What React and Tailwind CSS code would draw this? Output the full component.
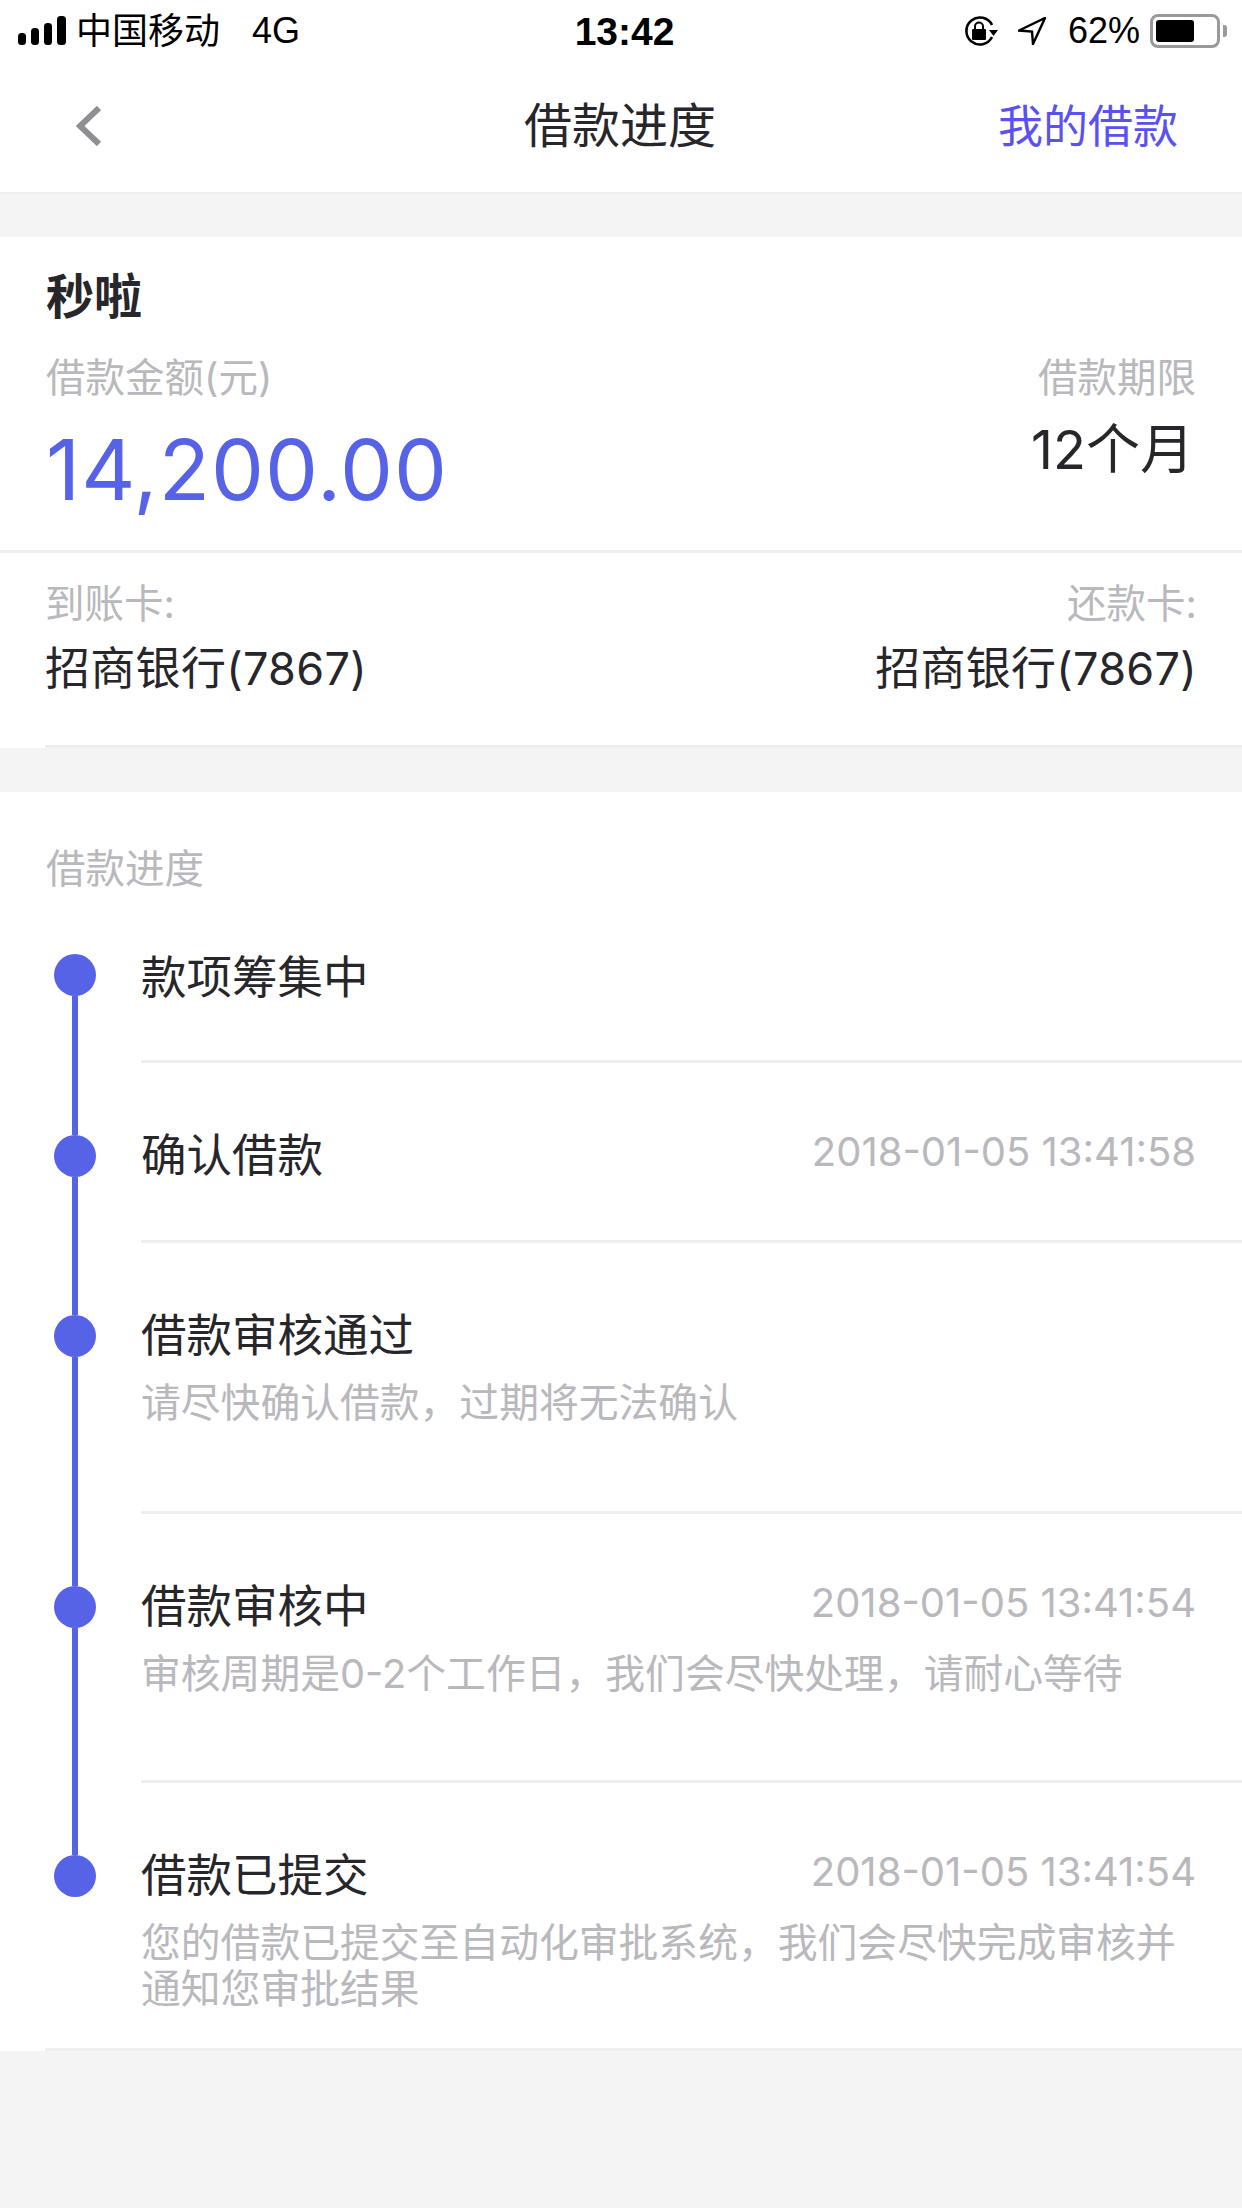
import React from "react";

const rows = [
  { title: "款项筹集中", h: "h-[170px]" },
  { title: "确认借款", time: "2018-01-05 13:41:58", h: "h-[180px]" },
  { title: "借款审核通过", desc: "请尽快确认借款，过期将无法确认", h: "h-[271px]" },
  {
    title: "借款审核中",
    time: "2018-01-05 13:41:54",
    desc: "审核周期是0-2个工作日，我们会尽快处理，请耐心等待",
    h: "h-[269px]",
  },
  {
    title: "借款已提交",
    time: "2018-01-05 13:41:54",
    desc: "您的借款已提交至自动化审批系统，我们会尽快完成审核并通知您审批结果",
    h: "h-[268px]",
    last: true,
  },
];

const StatusBar = () => (
  <div className="grid h-[60px] grid-cols-[1fr_auto_1fr] items-center pl-[18px] pr-[15px] pt-[2px] text-[36px] leading-none text-black">
    <div className="flex items-center">
      <svg width="48" height="30" viewBox="0 0 48 30" className="mr-[10px]">
        <rect x="0" y="17" width="8" height="12" rx="3.5" fill="#000" />
        <rect x="13" y="12" width="8" height="17" rx="3.5" fill="#000" />
        <rect x="26" y="7" width="8" height="22" rx="3.5" fill="#000" />
        <rect x="39" y="0" width="9" height="29" rx="3.5" fill="#000" />
      </svg>
      <span className="text-[36px]">中国移动</span>
      <span className="ml-[32px] font-['Liberation_Sans',sans-serif] text-[36px]">4G</span>
    </div>
    <div className="font-['Liberation_Sans',sans-serif] pl-[4px] text-[39px] font-bold">13:42</div>
    <div className="flex items-center justify-end">
      <svg width="34" height="30" viewBox="0 0 34 30" className="mr-[20px]">
        <path d="M28 21A13.5 13.5 0 1 1 28 9" fill="none" stroke="#000" strokeWidth="2.6" />
        <path d="M25 14h9l-4.500 6z" fill="#000" />
        <rect x="8" y="13" width="14" height="11" rx="1" fill="#000" />
        <path d="M11 13v-2.500a4 4 0 0 1 8 0V13" fill="none" stroke="#000" strokeWidth="2" />
      </svg>
      <svg width="28" height="28" viewBox="0 0 28 28" className="mr-[22px]">
        <path d="M27 1 1 13.500l13 1 1 12.500z" fill="none" stroke="#000" strokeWidth="2.400" strokeLinejoin="miter" />
      </svg>
      <span className="font-['Liberation_Sans',sans-serif] text-[36px]">62%</span>
      <div className="ml-[10px] flex h-[34px] w-[70px] items-stretch rounded-[8px] border-[3px] border-[#999999] p-[3px]">
        <div className="w-[38px] rounded-[3px] bg-black" />
      </div>
      <div className="ml-[3px] h-[12px] w-[4px] rounded-r-[3px] bg-[#999999]" />
    </div>
  </div>
);

const NavBar = () => (
  <div className="grid h-[134px] grid-cols-[1fr_auto_1fr] items-center border-b-[2px] border-[#eeeeee] pl-[76px] pr-[64px]">
    <svg width="26" height="40" viewBox="0 0 26 40">
      <path d="M23 2 4 20l19 18" fill="none" stroke="#8e8e93" strokeWidth="6" />
    </svg>
    <div className="pr-[14px] text-[48px] leading-none text-[#26262b]">借款进度</div>
    <div className="text-right text-[45px] leading-none text-[#5b50f0]">我的借款</div>
  </div>
);

const Summary = () => (
  <div className="bg-white">
    <div className="flex h-[316px] flex-col border-b-[3px] border-[#eeeeee] px-[46px]">
      <div className="mt-[36px] text-[48px] font-bold leading-[48px] text-[#26262b]">秒啦</div>
      <div className="mt-[33px] flex items-start justify-between">
        <div>
          <div className="text-[39.5px] leading-[48px] text-[#b8b8bd]">借款金额(元)</div>
          <div className="mt-[23px] text-[84px] leading-[90px] tracking-[1px] text-[#5763e6]">14,200.00</div>
        </div>
        <div className="flex flex-col items-end">
          <div className="text-[39.5px] leading-[48px] text-[#b8b8bd]">借款期限</div>
          <div className="mt-[18px] pr-[2px] text-[54px] leading-[60px] text-[#26262b]">12个月</div>
        </div>
      </div>
    </div>
    <div className="ml-[45px] flex h-[195px] justify-between border-b-[3px] border-[#eeeeee] pr-[45px] pt-[27px]">
      <div>
        <div className="text-[39.5px] leading-[48px] text-[#b8b8bd]">到账卡:</div>
        <div className="mt-[15px] text-[45px] leading-[52px] tracking-[0.3px] text-[#26262b]">招商银行(7867)</div>
      </div>
      <div className="flex flex-col items-end">
        <div className="text-[39.5px] leading-[48px] text-[#b8b8bd]">还款卡:</div>
        <div className="mt-[15px] text-[45px] leading-[52px] tracking-[0.3px] text-[#26262b]">招商银行(7867)</div>
      </div>
    </div>
  </div>
);

const Step = ({ title, time, desc, h, index, last }) => (
  // the last row's divider runs further left, under the dot column
  <div className={`flex ${h} ${last ? "ml-[45px] border-b-[3px] border-[#eeeeee]" : ""}`}>
    <div className={`flex shrink-0 flex-col items-start ${last ? "w-[96px] pl-[9px]" : "w-[141px] pl-[54px]"}`}>
      <div className={`ml-[18px] w-[6px] ${index === 0 ? "h-[61px]" : "h-[72px] bg-[#5763e6]"}`} />
      <div className="h-[42px] w-[42px] shrink-0 rounded-full bg-[#5763e6]" />
      {!last && <div className="ml-[18px] w-[6px] flex-1 bg-[#5763e6]" />}
    </div>
    <div className={`flex-1 ${last ? "" : "border-b-[3px] border-[#eeeeee]"} ${index === 0 ? "pt-[57px]" : "pt-[65px]"}`}>
      <div className="flex items-start justify-between pr-[46px]">
        <div className="text-[45.5px] leading-[56px] text-[#26262b]">{title}</div>
        {time && <div className="text-[40px] leading-[48px] text-[#b8b8bd]">{time}</div>}
      </div>
      {desc && (
        <div className="mt-[16px] pr-[60px] text-[39.8px] leading-[46px] text-[#b8b8bd]">{desc}</div>
      )}
    </div>
  </div>
);

export default function App() {
  return (
    <div className="flex min-h-[2208px] w-[1242px] flex-col bg-[#f4f4f4] font-['Inter','Noto_Sans_CJK_SC',sans-serif]">
      <div className="bg-white">
        <StatusBar />
        <NavBar />
      </div>
      <div className="mt-[43px]">
        <Summary />
      </div>
      <div className="mt-[44px] bg-white">
        <div className="px-[46px] pt-[53px] text-[39.5px] leading-[48px] text-[#b8b8bd]">借款进度</div>
        {rows.map((r, i) => (
          <Step key={r.title} index={i} {...r} />
        ))}
      </div>
    </div>
  );
}
